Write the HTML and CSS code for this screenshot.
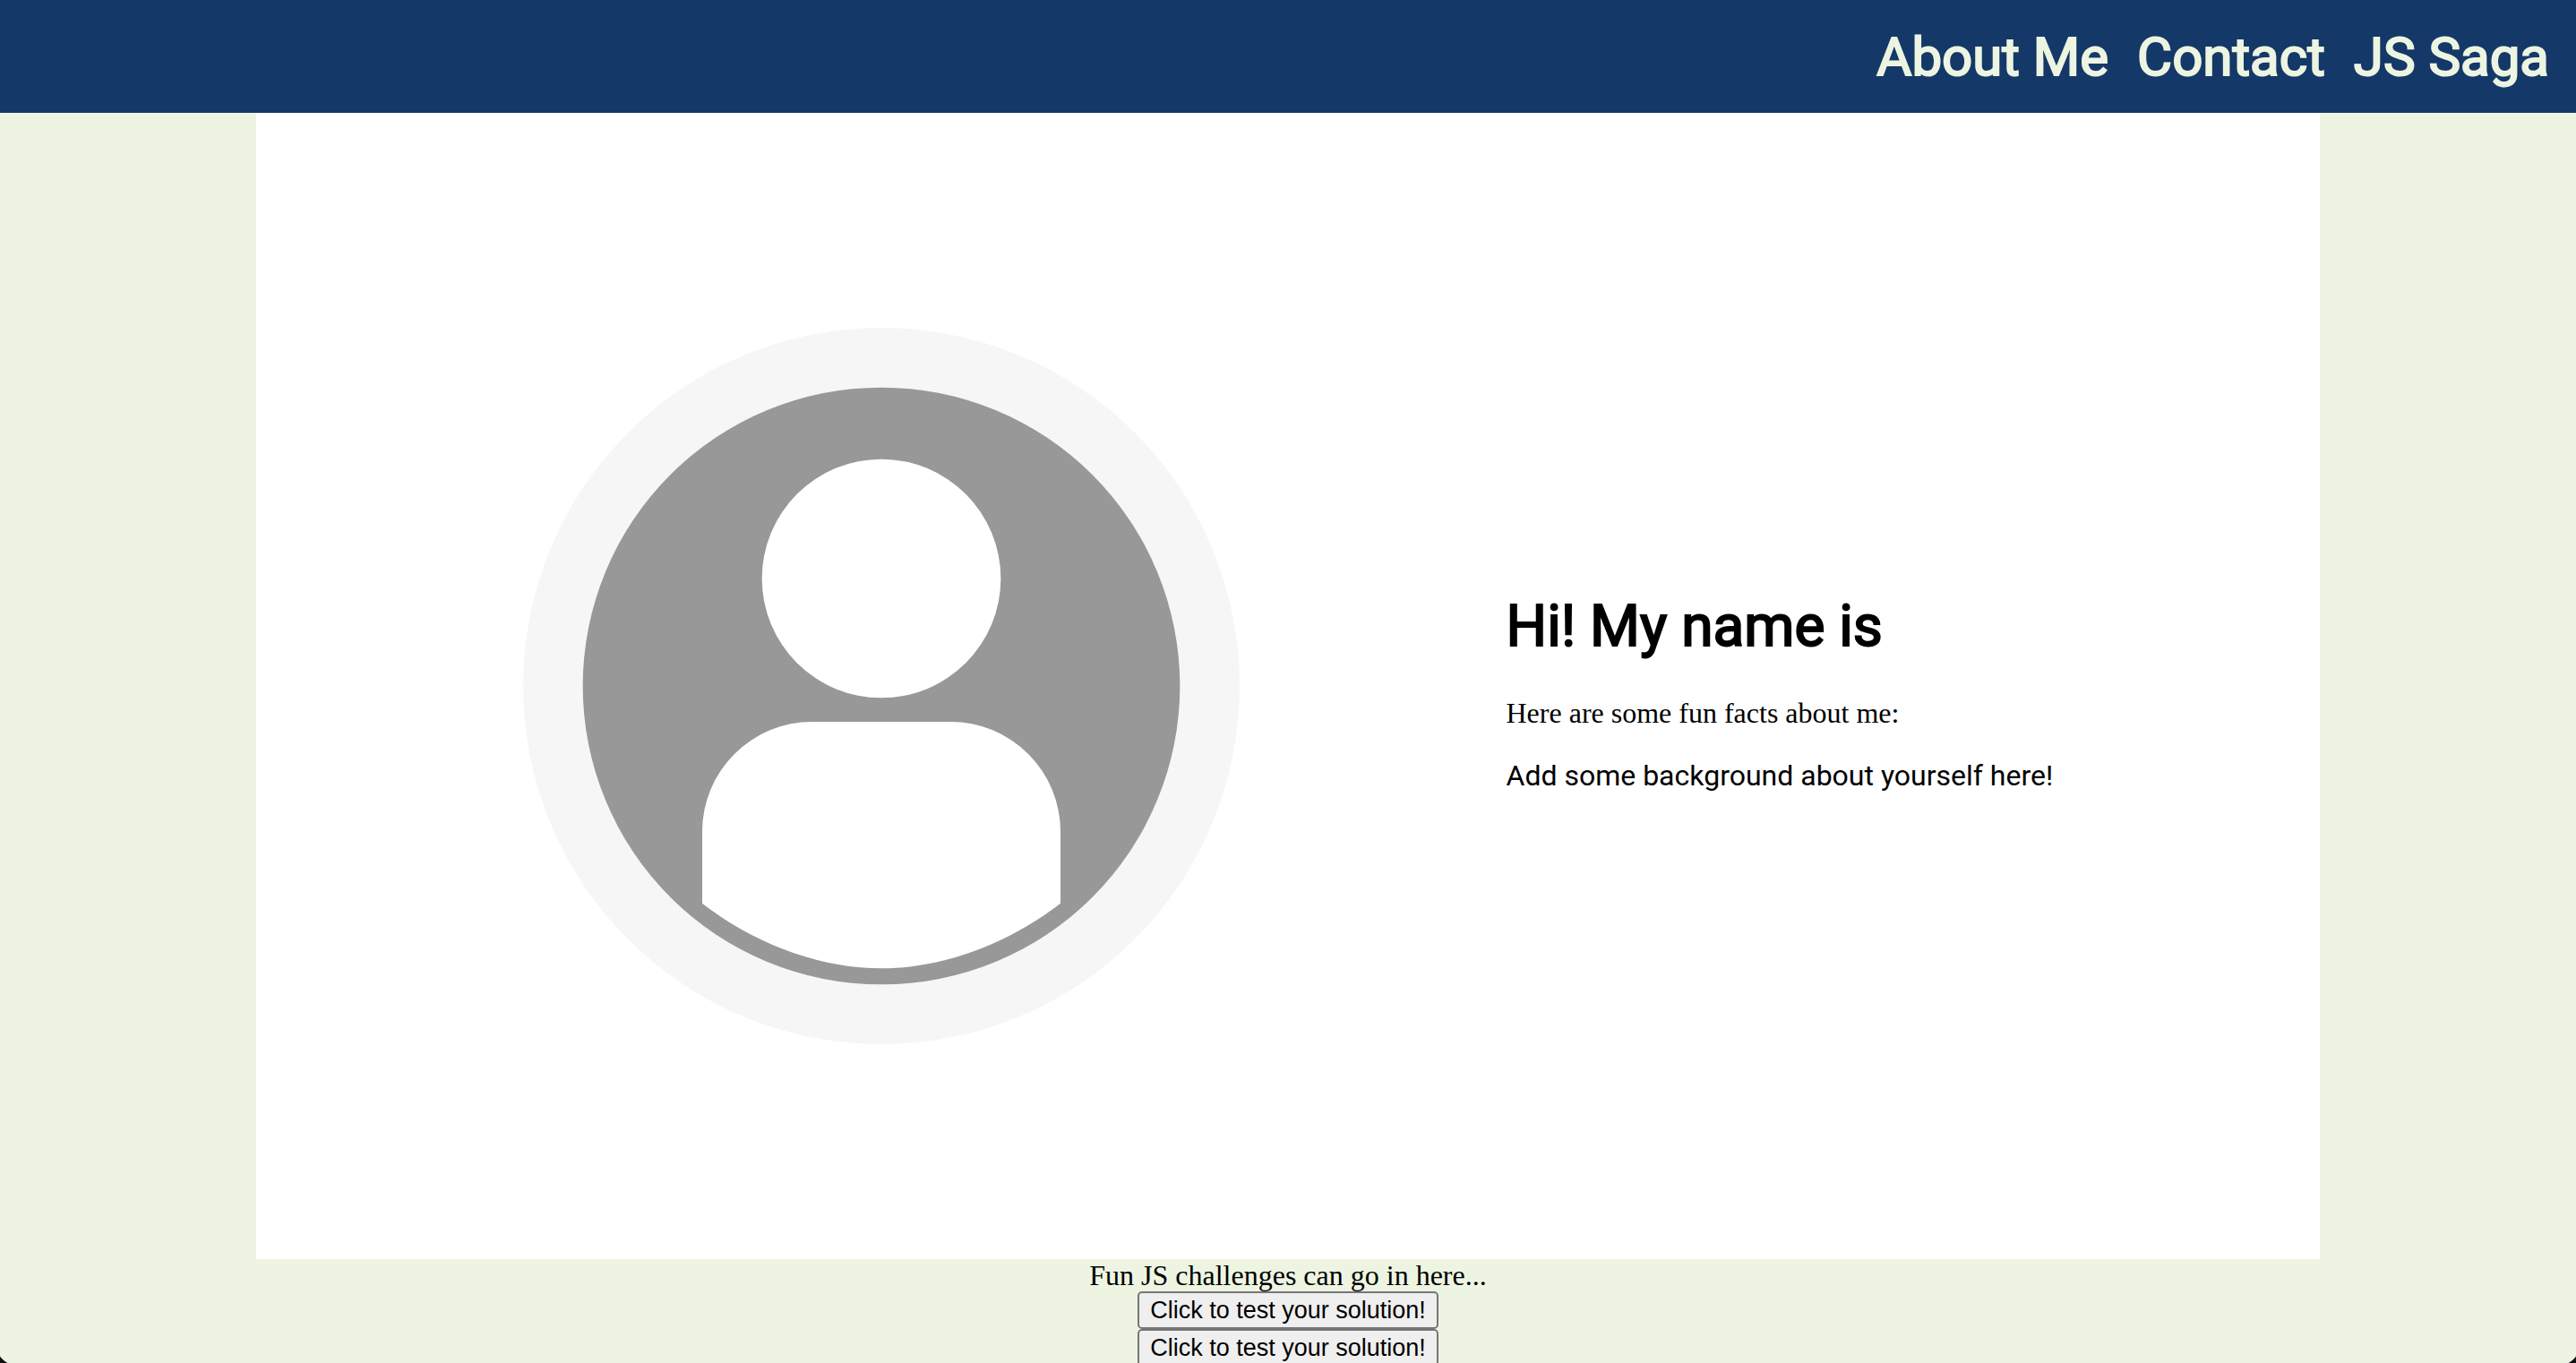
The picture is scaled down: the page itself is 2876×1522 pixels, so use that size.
FILE: index.html
```html
<!DOCTYPE html>
<html lang="en">
<head>
  <meta charset="utf-8">
  <meta name="viewport" content="width=device-width, initial-scale=1">
  <title>About Me</title>
  <link rel="stylesheet" href="styles.css">
</head>
<body>
  <header class="site-header">
    <nav class="site-nav">
      <a href="#about">About Me</a>
      <a href="#contact">Contact</a>
      <a href="#saga">JS Saga</a>
    </nav>
  </header>
  <main>
    <section class="about" id="about">
      <svg class="avatar" viewBox="0 0 24 24" role="img" aria-label="Profile picture">
        <circle cx="12" cy="12" r="12" fill="#f6f6f6"/>
        <circle cx="12" cy="12" r="10" fill="#989898"/>
        <circle cx="12" cy="8.4" r="4" fill="#fff"/>
        <path d="M6 19.28V16.88A3.68 3.68 0 0 1 9.68 13.2H14.32A3.68 3.68 0 0 1 18 16.88V19.28C16.2 20.68 14 21.46 12 21.46S7.8 20.68 6 19.28Z" fill="#fff"/>
      </svg>
      <div class="intro">
        <h1>Hi! My name is</h1>
        <p>Here are some fun facts about me:</p>
        <p class="background">Add some background about yourself here!</p>
      </div>
    </section>
    <section class="saga" id="saga">
      <div>Fun JS challenges can go in here...</div>
      <button type="button">Click to test your solution!</button>
      <button type="button">Click to test your solution!</button>
    </section>
  </main>
  <div class="corner corner-left"></div>
  <div class="corner corner-right"></div>
</body>
</html>
```
FILE: styles.css
```css
html {
  scrollbar-width: none;
}

body {
  margin: 0;
  background: #edf5e2;
  color: #000;
  font-family: "Liberation Serif", "Times New Roman", serif;
  font-size: 32px;
  line-height: 36px;
}

.site-header {
  padding: 26px 30px 24px;
  background: #143867;
}

.site-nav {
  display: flex;
  justify-content: flex-end;
  gap: 32px;
  font-family: Roboto, sans-serif;
  font-size: 60px;
  line-height: 76px;
  -webkit-text-stroke: 2px currentColor;
}

.site-nav a {
  color: #edf5e2;
  text-decoration: none;
}

.about {
  display: flex;
  flex-wrap: wrap;
  align-items: center;
  justify-content: space-evenly;
  max-width: 2304px;
  min-height: 1280px;
  margin: 0 auto;
  background: #fff;
}

.avatar {
  width: 800px;
  max-width: 100%;
}

.intro h1 {
  margin: 48px 0 40px;
  font-family: Roboto, sans-serif;
  font-size: 64px;
  font-weight: 400;
  line-height: 76px;
  -webkit-text-stroke: 2px currentColor;
}

.intro p {
  margin: 0 0 34px;
}

.intro .background {
  font-family: Roboto, sans-serif;
}

.saga {
  display: flex;
  flex-direction: column;
  align-items: center;
}

.saga button {
  height: 42px;
  padding: 0 12px;
  border: 2px solid #767676;
  border-radius: 5px;
  background: #efefef;
  color: #000;
  font-family: "Liberation Sans", Arial, sans-serif;
  font-size: 27px;
  line-height: 36px;
}

/* Rounded window corners */
.corner {
  position: fixed;
  bottom: 0;
  width: 20px;
  height: 20px;
}

.corner-left {
  left: 0;
  background: radial-gradient(circle at 22px -4px, transparent 27px, #111 28px);
}

.corner-right {
  right: 0;
  background: radial-gradient(circle at -2px -4px, transparent 27px, #111 28px);
}
```
